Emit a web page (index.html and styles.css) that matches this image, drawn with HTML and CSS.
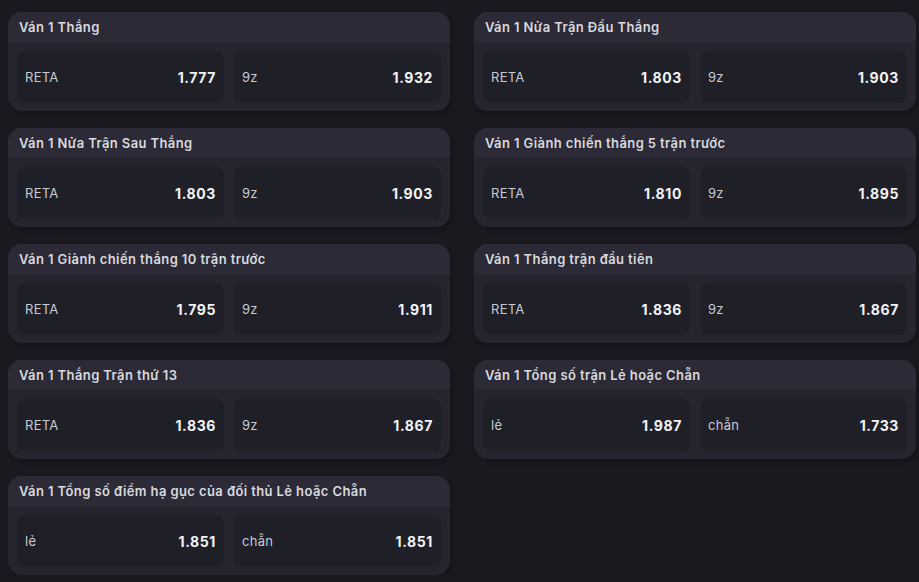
FILE: index.html
```html
<!DOCTYPE html>
<html lang="vi">
<head>
<meta charset="utf-8">
<link rel="stylesheet" href="styles.css">
</head>
<body>
<div class="grid">
  <div class="col">
    <div class="card">
      <div class="card-head">Ván 1 Thắng</div>
      <div class="card-body">
        <div class="opt"><span class="lbl">RETA</span><span class="odd">1.777</span></div>
        <div class="opt"><span class="lbl">9z</span><span class="odd">1.932</span></div>
      </div>
    </div>
    <div class="card">
      <div class="card-head">Ván 1 Nửa Trận Sau Thắng</div>
      <div class="card-body">
        <div class="opt"><span class="lbl">RETA</span><span class="odd">1.803</span></div>
        <div class="opt"><span class="lbl">9z</span><span class="odd">1.903</span></div>
      </div>
    </div>
    <div class="card">
      <div class="card-head">Ván 1 Giành chiến thắng 10 trận trước</div>
      <div class="card-body">
        <div class="opt"><span class="lbl">RETA</span><span class="odd">1.795</span></div>
        <div class="opt"><span class="lbl">9z</span><span class="odd">1.911</span></div>
      </div>
    </div>
    <div class="card">
      <div class="card-head">Ván 1 Thắng Trận thứ 13</div>
      <div class="card-body">
        <div class="opt"><span class="lbl">RETA</span><span class="odd">1.836</span></div>
        <div class="opt"><span class="lbl">9z</span><span class="odd">1.867</span></div>
      </div>
    </div>
    <div class="card">
      <div class="card-head">Ván 1 Tổng số điểm hạ gục của đối thủ Lẻ hoặc Chẵn</div>
      <div class="card-body">
        <div class="opt"><span class="lbl">lẻ</span><span class="odd">1.851</span></div>
        <div class="opt"><span class="lbl">chẵn</span><span class="odd">1.851</span></div>
      </div>
    </div>
  </div>
  <div class="col">
    <div class="card">
      <div class="card-head">Ván 1 Nửa Trận Đầu Thắng</div>
      <div class="card-body">
        <div class="opt"><span class="lbl">RETA</span><span class="odd">1.803</span></div>
        <div class="opt"><span class="lbl">9z</span><span class="odd">1.903</span></div>
      </div>
    </div>
    <div class="card">
      <div class="card-head">Ván 1 Giành chiến thắng 5 trận trước</div>
      <div class="card-body">
        <div class="opt"><span class="lbl">RETA</span><span class="odd">1.810</span></div>
        <div class="opt"><span class="lbl">9z</span><span class="odd">1.895</span></div>
      </div>
    </div>
    <div class="card">
      <div class="card-head">Ván 1 Thắng trận đầu tiên</div>
      <div class="card-body">
        <div class="opt"><span class="lbl">RETA</span><span class="odd">1.836</span></div>
        <div class="opt"><span class="lbl">9z</span><span class="odd">1.867</span></div>
      </div>
    </div>
    <div class="card">
      <div class="card-head">Ván 1 Tổng số trận Lẻ hoặc Chẵn</div>
      <div class="card-body">
        <div class="opt"><span class="lbl">lẻ</span><span class="odd">1.987</span></div>
        <div class="opt"><span class="lbl">chẵn</span><span class="odd">1.733</span></div>
      </div>
    </div>
  </div>
</div>
</body>
</html>
```
FILE: styles.css
```css
html, body {
  margin: 0;
  padding: 0;
  background: #1a1920;
  font-family: Inter, "Noto Sans", sans-serif;
  overflow: hidden;
}
.grid {
  display: grid;
  grid-template-columns: 442px 442px;
  column-gap: 24px;
  padding: 12px 0 0 8px;
}
.col {
  display: flex;
  flex-direction: column;
  gap: 17px;
}
.card {
  background: #26252f;
  border-radius: 14px;
  overflow: hidden;
  height: 99px;
  display: flex;
  flex-direction: column;
  box-shadow: 2px 3px 4px rgba(0,0,0,0.25);
}
.card-head {
  background: #2b2a36;
  height: 30px;
  line-height: 30px;
  padding: 0 11px;
  font-size: 13px;
  font-weight: 600;
  letter-spacing: 0.4px;
  color: #d9d9de;
  box-sizing: border-box;
}
.card-body {
  flex: 1;
  display: grid;
  grid-template-columns: 1fr 1fr;
  column-gap: 10px;
  padding: 9px 9px 8px 9px;
}
.opt {
  background: #1f1f27;
  border-radius: 8px;
  display: flex;
  align-items: center;
  justify-content: space-between;
  padding: 0 8px 0 8px;
}
.lbl {
  font-size: 13px;
  color: #c9cad3;
  font-weight: 400;
  letter-spacing: 0.3px;
}
.odd {
  font-size: 14px;
  font-weight: 700;
  letter-spacing: 0.6px;
  color: #f4f4f7;
}
```
